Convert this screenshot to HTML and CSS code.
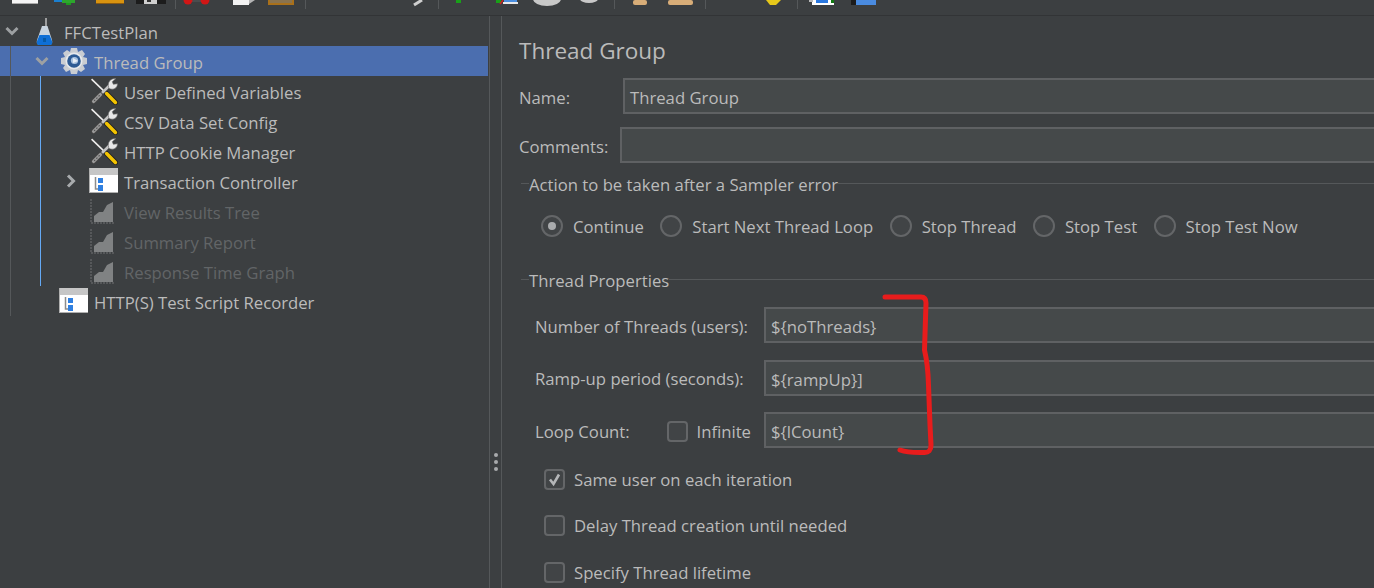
FILE: index.html
```html
<!doctype html>
<html lang="en-US">
    <head>
        <meta charset="utf-8"/>
        <title>FFCTestPlan - Thread Group</title>
        <link rel="stylesheet" href="styles.css">
    </head>
    <body>
        <svg class="defs" width="0" height="0">
            <symbol id="tools" viewBox="0 0 27 27">
                <path d="M1.5 2 L15 15" stroke="#3a3a3a" stroke-width="3" fill="none"/>
                <path d="M1.5 2 L15 15" stroke="#ececec" stroke-width="1.6" fill="none"/>
                <path d="M16 16 L24.5 24.5" stroke="#222" stroke-width="5" stroke-linecap="round" fill="none"/>
                <path d="M16 16 L24.5 24.5" stroke="#f4c400" stroke-width="3.4" stroke-linecap="round" fill="none"/>
                <path d="M10 17 L19 8" stroke="#c4c4c4" stroke-width="2.6" fill="none"/>
                <path d="M3.5 23.5 L10 17" stroke="#444" stroke-width="5" stroke-linecap="round" fill="none"/>
                <path d="M3.5 23.5 L10 17" stroke="#9a9a9a" stroke-width="3.2" stroke-linecap="round" fill="none"/>
                <path d="M4 23 L9.5 17.5" stroke="#4a4a4a" stroke-width="1" stroke-dasharray="1.5 1.5" fill="none"/>
                <path d="M18 10 C16.5 5 20 1 25 1.5 L21.5 4.5 L22.5 7 L26.5 6.5 C26.5 11 22 13 18.5 11 Z" fill="#e8e8e8" stroke="#666" stroke-width=".6"/>
            </symbol>
            <symbol id="flask" viewBox="0 0 17 27">
                <path d="M10 0 V9" stroke="#b5b5b5" stroke-width="1.6"/>
                <path d="M6 8 H11.5 L16 22 Q17 26 14 27 H3 Q0 26 1 22 Z" fill="#c8d3de"/>
                <path d="M3.5 17 H13.5 L16 23 Q17 27 14 27 H3 Q0 27 1 23 Z" fill="#0f6fd6"/>
                <path d="M7 20 h3 v4 h-3 z" fill="#075aa8"/>
            </symbol>
            <symbol id="gear" viewBox="0 0 28 28">
                <path d="M11 1 H17 L18 5 L22 3 L25 7 L23 10 L27 11 V17 L23 18 L25 22 L21 25 L18 23 L17 27 H11 L10 23 L6 25 L3 21 L5 18 L1 17 V11 L5 10 L3 6 L7 3 L10 5 Z" fill="#c9cdd2"/>
                <circle cx="14" cy="14" r="8.5" fill="#e6e9ec"/>
                <circle cx="14" cy="14" r="6.8" fill="#2d5b94"/>
                <circle cx="14.5" cy="13.5" r="3.6" fill="#a9c3e0"/>
                <path d="M13 11 L18 14 L13 16 Z" fill="#e8eff6"/>
            </symbol>
            <symbol id="window" viewBox="0 0 29 25">
                <rect width="29" height="25" fill="#fff"/>
                <rect width="29" height="7" fill="#c6c6c6"/>
                <rect y="24" width="29" height="1" fill="#b0b0b0"/>
                <rect width="1" height="25" fill="#b0b0b0"/>
                <path d="M6.5 9 V21 H10" stroke="#8c8c8c" stroke-width="1.5" fill="none"/>
                <rect x="9" y="10" width="5" height="5" fill="#2f7fe0"/>
                <rect x="9" y="17" width="5" height="6" fill="#2f7fe0"/>
            </symbol>
            <symbol id="chart" viewBox="0 0 25 25">
                <path d="M1 0 V24 H25" stroke="#5f6163" stroke-width="1.5" stroke-dasharray="2 1" fill="none"/>
                <path d="M4 23 V17 L9 13 L13 13 L17 6 L23 3 V23 Z" fill="#808283"/>
            </symbol>
            <symbol id="chevron-down" viewBox="0 0 14 10">
                <path d="M1.5 2 L7 7.5 L12.5 2" stroke="#9da0a2" stroke-width="3" fill="none"/>
            </symbol>
            <symbol id="chevron-right" viewBox="0 0 10 14">
                <path d="M2 1.5 L7.5 7 L2 12.5" stroke="#a8abad" stroke-width="3" fill="none"/>
            </symbol>
        </svg>

        <div class="toolbar">
            <span class="tool"><svg width="40" height="15"><rect x="7" width="26" height="4" fill="#f4f4f4"/><rect x="7" y="3" width="26" height="1" fill="#aaa"/></svg></span>
            <span class="tool"><svg width="40" height="15"><rect x="9" width="8" height="2" fill="#1b7fd0"/><rect x="17" width="13" height="3" fill="#2da52d"/><rect x="21" y="3" width="5" height="2" fill="#1e9a1e"/></svg></span>
            <span class="tool"><svg width="40" height="15"><rect x="11" width="28" height="4" fill="#d9930f"/><rect x="11" y="3" width="28" height="1" fill="#8a5a12"/></svg></span>
            <span class="tool"><svg width="40" height="15"><rect x="11" width="30" height="4" fill="#1c1c1c"/><rect x="19" width="13" height="4" fill="#cfcfcf"/><rect x="22" y="0" width="4" height="2" fill="#333"/></svg></span>
            <span class="tool-sep sep-a"></span>
            <span class="tool"><svg width="40" height="15"><rect x="12" width="21" height="2" fill="#4a4c4e"/><circle cx="12" cy="0" r="4.5" fill="#d11616"/><circle cx="29" cy="0" r="4.5" fill="#d11616"/></svg></span>
            <span class="tool"><svg width="40" height="15"><rect x="17" width="16" height="5" fill="#f2f2f2"/><path d="M33 0 H39 L33 4 Z" fill="#b5b5b5"/></svg></span>
            <span class="tool"><svg width="40" height="15"><rect x="12" width="26" height="5" fill="#a9701a"/><rect x="14" width="22" height="3" fill="#8a734e"/></svg></span>
            <span class="tool-sep sep-b"></span>
            <span class="tool"></span>
            <span class="tool"></span>
            <span class="tool"><svg width="40" height="15"><path d="M28 5 L36 0" stroke="#cfcfcf" stroke-width="3"/></svg></span>
            <span class="tool-sep sep-c"></span>
            <span class="tool"><svg width="40" height="15"><rect x="17" width="5" height="3" fill="#19a019"/></svg></span>
            <span class="tool"><svg width="40" height="15"><rect x="17" width="5" height="3" fill="#19a019"/><path d="M21 4 L24 0" stroke="#c22" stroke-width="1.5"/><rect x="25" width="13" height="3" fill="#4b8fe0"/><rect x="24" y="2" width="15" height="2" fill="#e8e8e8"/></svg></span>
            <span class="tool"><svg width="40" height="15"><ellipse cx="28" cy="-1" rx="14" ry="7" fill="#c8c8c8"/></svg></span>
            <span class="tool"><svg width="40" height="15"><ellipse cx="30" cy="-1" rx="9" ry="4" fill="#c8c8c8"/></svg></span>
            <span class="tool-sep sep-d"></span>
            <span class="tool"><svg width="40" height="15"><rect x="18" width="14" height="5" rx="2" fill="#d8ad78"/></svg></span>
            <span class="tool"><svg width="40" height="15"><rect x="13" width="25" height="5" rx="2" fill="#d8ad78"/></svg></span>
            <span class="tool-sep sep-a"></span>
            <span class="tool"></span>
            <span class="tool"><svg width="40" height="15"><path d="M20 0 H35 L30 5 H24 Z" fill="#e6c81a"/></svg></span>
            <span class="tool-sep sep-e"></span>
            <span class="tool"><svg width="40" height="15"><rect x="14" width="22" height="5" fill="#fff"/><rect x="18" width="12" height="3" fill="#2a78e0"/><rect x="33" width="3" height="3" fill="#127a12"/><rect x="11" width="4" height="2" fill="#bbb"/></svg></span>
            <span class="tool"><svg width="40" height="15"><rect x="13" width="5" height="5" fill="#1c1c1c"/><rect x="18" width="20" height="5" fill="#4a8be0"/></svg></span>
        </div>

        <div class="workspace">
            <div class="tree">
                <div class="guide guide-root"></div>
                <div class="guide guide-group"></div>

                <div class="row depth-0">
                    <span class="arrow"><svg class="chev-down"><use href="#chevron-down"/></svg></span>
                    <span class="icon"><svg class="ic-flask"><use href="#flask"/></svg></span>
                    <span class="row-text">FFCTestPlan</span>
                </div>
                <div class="row depth-1 selected">
                    <span class="arrow"><svg class="chev-down"><use href="#chevron-down"/></svg></span>
                    <span class="icon"><svg class="ic-gear"><use href="#gear"/></svg></span>
                    <span class="row-text">Thread Group</span>
                </div>
                <div class="row depth-2">
                    <span class="arrow"></span>
                    <span class="icon"><svg class="ic-tools"><use href="#tools"/></svg></span>
                    <span class="row-text">User Defined Variables</span>
                </div>
                <div class="row depth-2">
                    <span class="arrow"></span>
                    <span class="icon"><svg class="ic-tools"><use href="#tools"/></svg></span>
                    <span class="row-text">CSV Data Set Config</span>
                </div>
                <div class="row depth-2">
                    <span class="arrow"></span>
                    <span class="icon"><svg class="ic-tools"><use href="#tools"/></svg></span>
                    <span class="row-text">HTTP Cookie Manager</span>
                </div>
                <div class="row depth-2">
                    <span class="arrow"><svg class="chev-right"><use href="#chevron-right"/></svg></span>
                    <span class="icon"><svg class="ic-window"><use href="#window"/></svg></span>
                    <span class="row-text">Transaction Controller</span>
                </div>
                <div class="row depth-2 disabled">
                    <span class="arrow"></span>
                    <span class="icon"><svg class="ic-chart"><use href="#chart"/></svg></span>
                    <span class="row-text">View Results Tree</span>
                </div>
                <div class="row depth-2 disabled">
                    <span class="arrow"></span>
                    <span class="icon"><svg class="ic-chart"><use href="#chart"/></svg></span>
                    <span class="row-text">Summary Report</span>
                </div>
                <div class="row depth-2 disabled">
                    <span class="arrow"></span>
                    <span class="icon"><svg class="ic-chart"><use href="#chart"/></svg></span>
                    <span class="row-text">Response Time Graph</span>
                </div>
                <div class="row depth-1">
                    <span class="arrow"></span>
                    <span class="icon"><svg class="ic-window"><use href="#window"/></svg></span>
                    <span class="row-text">HTTP(S) Test Script Recorder</span>
                </div>
            </div>

            <div class="splitter">
                <span class="dot"></span>
                <span class="dot"></span>
                <span class="dot"></span>
            </div>

            <div class="panel">
                <h1 class="title">Thread Group</h1>

                <div class="field name-field">
                    <label>Name:</label>
                    <div class="textbox">Thread Group</div>
                </div>
                <div class="field comments-field">
                    <label>Comments:</label>
                    <div class="textbox"></div>
                </div>

                <div class="group-title action-title"><span>Action to be taken after a Sampler error</span></div>
                <div class="radios">
                    <span class="radio-item"><span class="radio checked"></span>Continue</span>
                    <span class="radio-item"><span class="radio"></span>Start Next Thread Loop</span>
                    <span class="radio-item"><span class="radio"></span>Stop Thread</span>
                    <span class="radio-item"><span class="radio"></span>Stop Test</span>
                    <span class="radio-item"><span class="radio"></span>Stop Test Now</span>
                </div>

                <div class="group-title props-title"><span>Thread Properties</span></div>
                <div class="props">
                    <div class="prop">
                        <label class="prop-label">Number of Threads (users):</label>
                        <div class="textbox">${noThreads}</div>
                    </div>
                    <div class="prop">
                        <label class="prop-label">Ramp-up period (seconds):</label>
                        <div class="textbox">${rampUp}]</div>
                    </div>
                    <div class="prop">
                        <label class="prop-label loop-label">
                            <span>Loop Count:</span>
                            <span class="check-item"><span class="checkbox"></span>Infinite</span>
                        </label>
                        <div class="textbox">${lCount}</div>
                    </div>
                </div>

                <div class="checks">
                    <div class="check-item">
                        <span class="checkbox">
                            <svg width="21" height="21" viewBox="0 0 21 21"><path d="M6 10.5 L9.5 15 L15 5.5" stroke="#b4b6b8" stroke-width="2.6" fill="none"/></svg>
                        </span>
                        Same user on each iteration
                    </div>
                    <div class="check-item"><span class="checkbox"></span>Delay Thread creation until needed</div>
                    <div class="check-item"><span class="checkbox"></span>Specify Thread lifetime</div>
                </div>
            </div>
        </div>

        <!-- hand drawn bracket on top of the screenshot -->
        <svg class="scribble" width="60" height="170" viewBox="880 292 60 170">
            <path d="M885 297 L921 297 Q926 297 926 303 L924.5 350 Q928 365 928.5 385 L930 425 L931 445 Q931 453 924 452.5 Q908 453 900 450" stroke="#e81c1c" stroke-width="5" stroke-linecap="round" stroke-linejoin="round" fill="none"/>
        </svg>
    </body>
</html>
```

FILE: styles.css
```css
body {
    background-color: #3c3f41;
    margin: 0;
    color: #bbbbbb;
    font-family: "Open Sans", sans-serif;
    font-size: 16.7px;
    height: 588px;
    overflow: hidden;
    display: flex;
    flex-direction: column;
}

.defs {
    position: absolute;
}

/* toolbar, icons are cut off by the top of the picture */
.toolbar {
    height: 15px;
    flex: none;
    display: flex;
    padding-left: 5px;
    border-bottom: 1px solid #323436;
}

.tool {
    width: 40px;
    height: 15px;
    flex: none;
}

.tool svg {
    display: block;
    overflow: visible;
}

.tool-sep {
    width: 1px;
    height: 9px;
    flex: none;
    background-color: #55585a;
}

.sep-a {
    margin: 0 0 0 10px;
}

.sep-b {
    margin: 0 0 0 9px;
}

.sep-c {
    margin: 0 0 0 12px;
}

.sep-d {
    margin: 0 0 0 15px;
}

.sep-e {
    margin: 0 0 0 11px;
}

.workspace {
    flex: 1;
    display: flex;
    min-height: 0;
}

/* tree */
.tree {
    width: 488px;
    flex: none;
    position: relative;
}

.row {
    height: 30px;
    display: flex;
    align-items: center;
    white-space: nowrap;
}

.row-text {
    padding-top: 2px;
}

.depth-0 {
    padding-left: 4px;
}

.depth-1 {
    padding-left: 34px;
}

.depth-2 {
    padding-left: 64px;
}

.selected {
    background-color: #4b6eaf;
}

.disabled {
    color: #626567;
}

.arrow {
    width: 26px;
    flex: none;
    display: flex;
    padding-left: 1px;
    box-sizing: border-box;
}

.icon {
    width: 34px;
    flex: none;
    display: flex;
    align-items: center;
}

.chev-down {
    width: 14px;
    height: 10px;
}

.chev-right {
    width: 10px;
    height: 14px;
    margin-left: 1px;
}

.ic-flask {
    width: 17px;
    height: 27px;
    margin-left: 6px;
}

.ic-gear {
    width: 28px;
    height: 28px;
}

.ic-tools {
    width: 28px;
    height: 28px;
}

.ic-window {
    width: 29px;
    height: 25px;
    margin-bottom: 2px;
    margin-left: -1px;
}

.ic-chart {
    width: 25px;
    height: 25px;
}

.guide {
    position: absolute;
    width: 1px;
}

.guide-root {
    left: 10px;
    top: 30px;
    height: 270px;
    background-color: #55585a;
    z-index: 1;
}

.guide-group {
    left: 40px;
    top: 60px;
    height: 210px;
    background-color: #64a9f5;
}

/* split pane handle */
.splitter {
    width: 13px;
    flex: none;
    border-left: 1px solid #55585a;
    border-right: 1px solid #55585a;
    display: flex;
    flex-direction: column;
    align-items: center;
    gap: 3px;
    padding-top: 437px;
    box-sizing: border-box;
    margin-left: 1px;
}

.dot {
    width: 4px;
    height: 4px;
    border-radius: 50%;
    background-color: #a8aaac;
}

/* form */
.panel {
    flex: 1;
    min-width: 0;
    padding-left: 17px;
    overflow: hidden;
}

.title {
    font-size: 22.5px;
    font-weight: normal;
    line-height: 32px;
    margin: 19px 0 11px 0;
}

.field {
    display: flex;
    align-items: center;
}

.field label,
.prop-label {
    padding-top: 2px;
}

.textbox {
    flex: 1;
    height: 36px;
    box-sizing: border-box;
    line-height: 36px;
    padding-left: 5px;
    margin-right: -6px;
    background-color: #45494a;
    border: 2px solid #5f6163;
    white-space: nowrap;
}

.name-field label {
    width: 104px;
    flex: none;
}

.comments-field {
    margin-top: 13px;
}

.comments-field label {
    width: 101px;
    flex: none;
}

.group-title {
    display: flex;
    align-items: center;
    margin-left: 2px;
    height: 24px;
    line-height: 24px;
}

.group-title::before {
    content: "";
    width: 8px;
    height: 1px;
    margin-top: -4px;
    background-color: #55585a;
}

.group-title::after {
    content: "";
    flex: 1;
    height: 1px;
    margin-top: -4px;
    background-color: #55585a;
}

.action-title {
    margin-top: 10px;
}

.radios {
    display: flex;
    align-items: center;
    height: 24px;
    margin: 17px 0 0 22px;
    gap: 16.5px;
}

.radio-item {
    display: flex;
    align-items: center;
    gap: 10px;
}

.radio {
    width: 22px;
    height: 22px;
    box-sizing: border-box;
    border: 2px solid #646668;
    border-radius: 50%;
    background-color: #414446;
    display: flex;
    align-items: center;
    justify-content: center;
}

.radio.checked::after {
    content: "";
    width: 8px;
    height: 8px;
    border-radius: 50%;
    background-color: #a9abad;
}

.props-title {
    margin-top: 31px;
}

.props {
    margin: 14px 0 0 16px;
    display: flex;
    flex-direction: column;
    gap: 16.6px;
}

.prop {
    display: flex;
    align-items: center;
}

.prop-label {
    width: 229px;
    flex: none;
    box-sizing: border-box;
}

.loop-label {
    display: flex;
    align-items: center;
    justify-content: space-between;
    padding-right: 13px;
}

.check-item {
    display: flex;
    align-items: center;
    gap: 9px;
}

.checkbox {
    width: 21px;
    height: 21px;
    flex: none;
    box-sizing: border-box;
    border: 2px solid #646668;
    border-radius: 4px;
    background-color: #414446;
    overflow: hidden;
}

.checkbox svg {
    display: block;
    margin: -2px;
}

.checks {
    margin: 20px 0 0 25px;
    display: flex;
    flex-direction: column;
    gap: 23.3px;
}

.checks .check-item {
    height: 23px;
}

.scribble {
    position: absolute;
    left: 880px;
    top: 292px;
}
```
